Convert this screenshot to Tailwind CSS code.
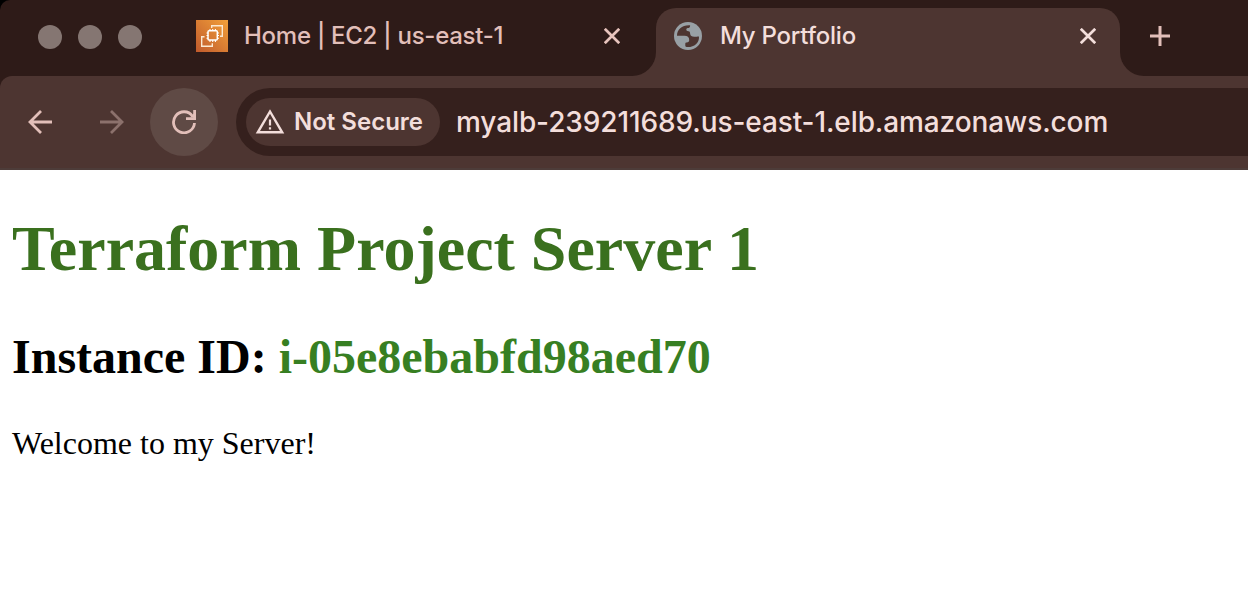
<!DOCTYPE html>
<html lang="en">
<head>
<meta charset="utf-8">
<title>My Portfolio</title>
<script src="https://cdn.jsdelivr.net/npm/@tailwindcss/browser@4"></script>
</head>
<body class="h-screen overflow-hidden bg-white">
<div class="bg-black">
<header class="overflow-hidden rounded-tl-[10px] bg-[#2e1b18] font-[Inter,sans-serif]">
  <div class="flex h-[76px] items-end">
    <div class="flex h-[76px] w-[632px] items-start">
      <div class="flex gap-4 pt-[25px] pl-[38px]">
        <span class="size-6 rounded-full bg-[#857672]"></span>
        <span class="size-6 rounded-full bg-[#857672]"></span>
        <span class="size-6 rounded-full bg-[#857672]"></span>
      </div>
      <svg class="mt-5 ml-[54px] size-8 shrink-0" viewBox="0 0 32 32" fill="none">
        <defs><linearGradient id="o" x1="0" y1="32" x2="32" y2="0" gradientUnits="userSpaceOnUse"><stop stop-color="#c05a2c"/><stop offset="1" stop-color="#f2a03a"/></linearGradient></defs>
        <path fill="url(#o)" d="M0 0h32v32H0z"/>
        <path stroke="#fbe9d2" stroke-width="1.400" d="M15.700 8V5.700h10.600v10.600H24M8.500 16.700H5.700v9.600h10.600v-3"/>
        <rect x="12" y="10.800" width="9.300" height="9.300" rx="1" stroke="#fff" stroke-width="1.500"/>
        <path stroke="#fff" stroke-width="1.100" d="M14 9v2m2.700-2v2m2.700-2v2M14 20v2m2.700-2v2m2.700-2v2M10.500 13h2m-2 2.500h2m-2 2.700h2M21 13h2m-2 2.500h2m-2 2.700h2"/>
      </svg>
      <span class="mt-5 ml-4 w-[360px] text-[24px] leading-8 font-[450] tracking-[-0.260px] whitespace-nowrap text-[#e2bfb9]">Home | EC2 | us-east-1</span>
      <svg class="mt-7 size-4 shrink-0" viewBox="0 0 16 16" stroke="#e8c4bd" stroke-width="2.700"><path d="M.8.800l14.400 14.400M15.200.800L.8 15.200"/></svg>
    </div>
    <div class="size-6 bg-[#4d3531]"><div class="size-6 rounded-br-3xl bg-[#2e1b18]"></div></div>
    <div class="flex h-[68px] w-[464px] items-start rounded-t-[20px] bg-[#4d3531] pl-[18px]">
      <svg class="mt-[14px] size-7 shrink-0" viewBox="0 0 28 28">
        <circle cx="14" cy="14" r="14" fill="#98a0a5"/>
        <path fill="#4d3531" d="M3 13.700C3 7.500 8 2.900 15.700 3.200c.8 0 .5 1.500-.2 2.200-.8.700-2.500.5-3 1.300-.7 1.200.3 2.500 2 2.600 1.500.1 1.500 1.200 1.700 2.800.2 2 1.800 2.900 4.800 2.700 1.700-.1 3.900-.7 4-.1.3 6.400-5.400 11-12.400 10.300-.8-.1-1.300-.4-1.300-1.200v-2.200c0-.7.500-1 1.300-1.100 1.900-.2 2.600-1 2.600-2.600 0-2.800-1.800-4.200-4.600-4.200z"/>
      </svg>
      <span class="mt-3 ml-[18px] w-[360px] text-[24px] leading-8 font-[450] tracking-[-0.240px] whitespace-nowrap text-[#f3dedb]">My Portfolio</span>
      <svg class="mt-5 size-4 shrink-0" viewBox="0 0 16 16" stroke="#f3dedb" stroke-width="2.700"><path d="M.8.800l14.400 14.400M15.200.800L.8 15.200"/></svg>
    </div>
    <div class="size-6 bg-[#4d3531]"><div class="size-6 rounded-bl-3xl bg-[#2e1b18]"></div></div>
    <svg class="mb-[30px] ml-[6px] size-5" viewBox="0 0 20 20" stroke="#e2bfb9" stroke-width="3"><path d="M10 0v20M0 10h20"/></svg>
  </div>
  <div class="flex h-[94px] items-start rounded-tl-xl border-b-2 border-[#4d3c39] bg-[#4d3531] pt-3">
    <svg class="mt-[22px] ml-7 size-6" viewBox="0 0 24 24" fill="none" stroke="#e2bfb9" stroke-width="2.800"><path d="M24 12H2M13 1L2 12l11 11"/></svg>
    <svg class="mt-[22px] ml-12 size-6" viewBox="0 0 24 24" fill="none" stroke="#8c716c" stroke-width="2.800"><path d="M0 12h22M11 1l11 11-11 11"/></svg>
    <div class="ml-[26px] flex size-[68px] items-center justify-center rounded-full bg-[#5f4a45]">
      <svg class="size-6" viewBox="0 0 24 24" fill="none" stroke="#e2bfb9" stroke-width="2.800"><path d="M20.600 6.200A10.500 10.500 0 1 0 22.500 13M14 8.600h8.600V0"/><path fill="#e2bfb9" stroke="none" d="M18 7.500l4-4v4z"/></svg>
    </div>
    <div class="ml-[18px] flex h-[68px] flex-1 items-center rounded-l-full bg-[#35201d] pl-[10px]">
      <div class="flex h-12 w-[194px] shrink-0 items-center rounded-full bg-[#4d3531] pl-[9px]">
        <svg class="size-[30px] shrink-0" viewBox="0 0 30 30" fill="none" stroke="#f3dedb"><path stroke-width="2.400" d="M15 4.500L2.800 25.300h24.400z"/><path stroke-width="2.200" d="M15 12.500v6M15 20.300v2.300"/></svg>
        <span class="ml-[9px] text-[24px] leading-8 font-semibold whitespace-nowrap text-[#f3dedb]">Not Secure</span>
      </div>
      <span class="ml-4 text-[28px] leading-9 font-[450] tracking-[-0.100px] whitespace-nowrap text-[#f3dedb]">myalb-239211689.us-east-1.elb.amazonaws.com</span>
    </div>
  </div>
</header>
</div>
<main class="pt-[42px] pl-3 font-['Liberation_Serif',serif] text-black">
  <h1 class="text-[64px] leading-[74px] font-bold text-[#3a701e]">Terraform Project Server 1</h1>
  <h2 class="mt-[43px] text-[48px] leading-[56px] font-bold">Instance ID: <span class="text-[#377f22]">i-05e8ebabfd98aed70</span></h2>
  <p class="mt-10 text-[32px] leading-9">Welcome to my Server!</p>
</main>
</body>
</html>
